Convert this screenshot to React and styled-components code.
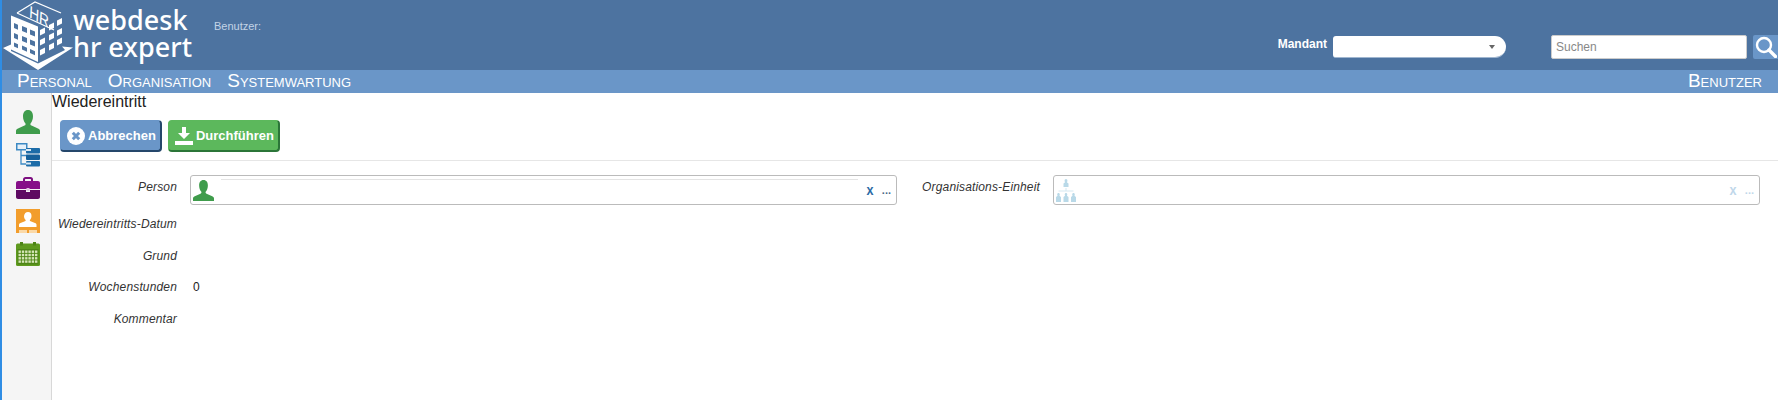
import React from 'react'
import styled, { createGlobalStyle } from 'styled-components'

const GlobalStyle = createGlobalStyle`
  html, body { margin: 0; padding: 0; height: 100%; background: #fff; overflow: hidden; }
  body { font-family: "Liberation Sans", Arial, sans-serif; font-size: 12px; color: #222; }
  #root { height: 100%; }
`

const PersonIcon = ({ size = 24, color = '#3f9c4c' }) => (
  <svg width={size} height={size} viewBox="0 0 24 24">
    <path fill={color} d="M12 0c3.300 0 5 2.700 5 6.200 0 3-1 5.400-2.300 7-.7.9-.3 1.900.8 2.400l6.500 3c1.300.6 2 1.300 2 2.400V24H0v-3c0-1.100.7-1.800 2-2.400l6.500-3c1.100-.5 1.500-1.500.8-2.400C8 11.600 7 9.200 7 6.200 7 2.700 8.700 0 12 0z" />
  </svg>
)

const TreeIcon = () => (
  <svg width="24" height="24" viewBox="0 0 24 24">
    <rect x="0.750" y="0.750" width="10" height="6" fill="#e6f0f8" stroke="#3d8ac4" strokeWidth="1.500" />
    <path d="M5 7v14h6M5 12.500h6" fill="none" stroke="#3d8ac4" strokeWidth="1.300" />
    <rect x="10" y="5" width="14" height="5.500" rx="1" fill="#1c6ca8" />
    <rect x="10" y="11.500" width="14" height="5.500" rx="1" fill="#15609a" />
    <rect x="10" y="18" width="14" height="5.500" rx="1" fill="#1c6ca8" />
    <path d="M10 7h5M10 20.500h5" stroke="#dbe9f4" strokeWidth="2" />
  </svg>
)

const CaseIcon = () => (
  <svg width="24" height="22" viewBox="0 0 24 22">
    <path fill="none" stroke="#7d0f80" strokeWidth="2" d="M8 4.500V2.500C8 1.600 8.600 1 9.500 1h5c.9 0 1.500.6 1.500 1.500v2" />
    <path fill="#860f88" d="M2 4h20c1.100 0 2 .9 2 2v6H0V6c0-1.100.9-2 2-2z" />
    <path fill="#5e0a62" d="M0 13h10v2h4v-2h10v7c0 1.100-.9 2-2 2H2c-1.100 0-2-.9-2-2z" />
    <rect x="10.500" y="11" width="3" height="3" fill="#e3c8e4" />
  </svg>
)

const OrgPersonIcon = () => (
  <svg width="24" height="24" viewBox="0 0 24 24">
    <rect width="24" height="24" fill="#f29d2c" />
    <path fill="#fff" d="M12 3c2.300 0 3.500 1.700 3.500 3.900 0 1.700-.7 3-1.500 3.900-.5.600-.2 1.200.6 1.500l4.400 1.700c1 .4 1.500 1 1.500 1.800V18H3v-2.200c0-.8.500-1.400 1.500-1.800l4.400-1.700c.8-.3 1.100-.9.600-1.500-.8-.9-1.500-2.200-1.500-3.900C8.500 4.700 9.700 3 12 3z" />
    <rect x="3" y="21" width="8" height="3" fill="#fbd9a8" />
    <rect x="13" y="21" width="8" height="3" fill="#fbd9a8" />
  </svg>
)

const CalendarIcon = () => {
  const cells = []
  for (let r = 0; r < 4; r++) {
    for (let c = 0; c < 6; c++) {
      cells.push(<rect key={r + '-' + c} x={2.500 + c * 3.300} y={8.500 + r * 3.300} width="2.400" height="2.400" fill="#d6e6b8" />)
    }
  }
  return (
    <svg width="24" height="24" viewBox="0 0 24 24">
      <rect y="1.500" width="24" height="22.500" rx="1.500" fill="#5f9a1f" />
      <rect x="4" width="3" height="3.500" fill="#4d8416" />
      <rect x="17" width="3" height="3.500" fill="#4d8416" />
      <rect x="1.500" y="7" width="21" height="15.500" fill="#4e8517" />
      {cells}
    </svg>
  )
}

const OrgTreeIcon = () => (
  <svg width="20" height="24" viewBox="0 0 20 24" fill="#b9d9e8">
    <path d="M10 1c.9 0 1.400.8 1.400 1.700 0 .7-.3 1.200-.5 1.500l1.600 1.300V9h-5V5.500l1.600-1.300c-.2-.3-.5-.8-.5-1.500C8.600 1.800 9.100 1 10 1z" />
    <path d="M2.500 15c.8 0 1.300.7 1.300 1.500 0 .6-.2 1-.4 1.300L5 19v5H0v-5l1.600-1.200c-.2-.3-.4-.7-.4-1.300 0-.8.500-1.500 1.300-1.500z" />
    <path d="M10 15c.8 0 1.300.7 1.300 1.500 0 .6-.2 1-.4 1.300L12.500 19v5h-5v-5l1.600-1.200c-.2-.3-.4-.7-.4-1.300 0-.8.500-1.500 1.300-1.500z" />
    <path d="M17.500 15c.8 0 1.300.7 1.300 1.500 0 .6-.2 1-.4 1.300L20 19v5h-5v-5l1.600-1.200c-.2-.3-.4-.7-.4-1.300 0-.8.500-1.500 1.300-1.500z" />
    <path d="M2.500 13h15M10 10v3" stroke="#d5e8f1" strokeWidth="1" fill="none" />
  </svg>
)

const LogoBuilding = () => (
  <svg width="71" height="70" viewBox="0 0 71 70">
    <path fill="#fff" d="M1 48l8-3.600V51l27 12.600L63 50l-3-3.500 11 1L36 70z" />
    <path fill="#fff" fillRule="evenodd" d="M9 15.500l27 11V62L9 49.500zM12 23v5l4 1.700v-5zM20 26v5l5 2v-5zM28 29.500v5l5 2v-5zM12 33v5l4 1.700v-5zM20 36v5l5 2v-5zM28 39.500v5l5 2v-5zM12 42.500v4l4 1.800v-4zM20 45.500v4l5 2.300v-4zM28 49v4l5 2.300v-4z" />
    <path fill="#fff" d="M38 30l5-2.500v5.500l-5 2.500zM47 25l5-2.500V28l-5 2.500zM55 20.500l5-2.500v5.500l-5 2.500zM38 40l5-2.500V43l-5 2.500zM47 35l5-2.500V38l-5 2.500zM55 30.500l5-2.500V33.500l-5 2.500zM38 50l5-2.500V53l-5 2.500zM47 45l5-2.500V48l-5 2.500zM55 40l5-2.500V43l-5 2.500z" />
    <path fill="none" stroke="#fff" strokeWidth="1.200" d="M15 13L33 2l26 11M15 13l37 17" />
    <text x="0" y="0" fill="#fff" fontFamily="Liberation Sans" fontSize="17" transform="matrix(.8 .45 -.05 1 27 17)">HR</text>
  </svg>
)

const SearchIcon = () => (
  <svg width="22" height="22" viewBox="0 0 22 22" fill="none" stroke="#fff">
    <circle cx="9" cy="9" r="7" strokeWidth="2.400" />
    <path d="M14 14l6.500 6.500" strokeWidth="3.400" strokeLinecap="round" />
  </svg>
)

const CancelIcon = () => (
  <svg width="18" height="18" viewBox="0 0 18 18">
    <circle cx="9" cy="9" r="9" fill="#fff" />
    <path d="M5.800 5.800l6.400 6.400M12.200 5.800l-6.400 6.400" stroke="#6a96c8" strokeWidth="3" />
  </svg>
)

const DownloadIcon = () => (
  <svg width="18" height="18" viewBox="0 0 18 18" fill="#fff">
    <path d="M7 0h4v6h4l-6 6-6-6h4z" />
    <rect y="14" width="18" height="4" />
  </svg>
)

export default function App() {
  return (
    <Page>
      <GlobalStyle />
      <Header>
        <LogoBuilding />
        <LogoText>
          <span>webdesk</span>
          <span>hr expert</span>
        </LogoText>
        <UserLabel>Benutzer:</UserLabel>
        <HeaderRight>
          <MandantLabel>Mandant</MandantLabel>
          <MandantSelect><Caret /></MandantSelect>
          <SearchInput placeholder="Suchen" readOnly />
          <SearchButton><SearchIcon /></SearchButton>
        </HeaderRight>
      </Header>
      <Nav>
        <NavGroup>
          <NavItem>Personal</NavItem>
          <NavItem>Organisation</NavItem>
          <NavItem>Systemwartung</NavItem>
        </NavGroup>
        <NavItem>Benutzer</NavItem>
      </Nav>
      <Main>
        <Sidebar>
          <SideIcon><PersonIcon /></SideIcon>
          <SideIcon><TreeIcon /></SideIcon>
          <SideIcon><CaseIcon /></SideIcon>
          <SideIcon><OrgPersonIcon /></SideIcon>
          <SideIcon><CalendarIcon /></SideIcon>
        </Sidebar>
        <Content>
          <Title>Wiedereintritt</Title>
          <Toolbar>
            <ActionButton $bg="#6a96c8" $dark="#25476b"><CancelIcon />Abbrechen</ActionButton>
            <ActionButton $bg="#5cb85c" $dark="#2b7538"><DownloadIcon />Durchführen</ActionButton>
          </Toolbar>
          <Form>
            <Column>
              <Row $h={37}>
                <Label>Person</Label>
                <PickerBox>
                  <PersonIcon size={21} />
                  <PickerLine />
                  <ClearX>x</ClearX>
                  <Dots>...</Dots>
                </PickerBox>
              </Row>
              <Row><Label>Wiedereintritts-Datum</Label></Row>
              <Row $h={31}><Label>Grund</Label></Row>
              <Row><Label>Wochenstunden</Label><Value>0</Value></Row>
              <Row><Label>Kommentar</Label></Row>
            </Column>
            <Column>
              <Row $h={37}>
                <Label>Organisations-Einheit</Label>
                <PickerBox>
                  <OrgTreeIcon />
                  <Spacer />
                  <ClearX $faded>x</ClearX>
                  <Dots $faded>...</Dots>
                </PickerBox>
              </Row>
            </Column>
          </Form>
        </Content>
      </Main>
    </Page>
  )
}

const Page = styled.div`
  height: 100vh;
  display: flex;
  flex-direction: column;
  border-left: 2px solid #2f8de4;
  box-sizing: border-box;
`
const Header = styled.header`
  height: 70px;
  flex: none;
  background: #4d73a0;
  display: flex;
  align-items: flex-start;
`
const LogoText = styled.div`
  display: flex;
  flex-direction: column;
  margin: 6px 0 0 0;
  color: #fff;
  font-family: "Noto Sans", sans-serif;
  font-size: 27px;
  font-weight: 500;
  line-height: 27px;
`
const UserLabel = styled.div`
  margin: 20px 0 0 22px;
  font-size: 11px;
  color: #c3d3e6;
`
const HeaderRight = styled.div`
  margin-left: auto;
  display: flex;
  align-items: flex-start;
  padding-top: 35px;
`
const MandantLabel = styled.div`
  font-size: 12px;
  font-weight: bold;
  color: #fff;
  margin: 2px 6px 0 0;
`
const MandantSelect = styled.div`
  width: 173px;
  height: 22px;
  margin-top: 1px;
  background: #fff;
  border-radius: 3px 11px 11px 3px;
  border-bottom: 1px solid #9fb6d0;
  display: flex;
  align-items: center;
  justify-content: flex-end;
  padding-right: 11px;
  box-sizing: border-box;
`
const Caret = styled.span`
  width: 0;
  height: 0;
  border-left: 3.500px solid transparent;
  border-right: 3.500px solid transparent;
  border-top: 4px solid #666;
`
const SearchInput = styled.input`
  width: 196px;
  height: 24px;
  margin-left: 45px;
  box-sizing: border-box;
  padding: 0 4px;
  border: 1px solid #ccc;
  border-radius: 2px;
  background: #fff;
  font: 12px "Liberation Sans", sans-serif;
  &::placeholder { color: #888; }
`
const SearchButton = styled.div`
  width: 25px;
  height: 24px;
  margin-left: 6px;
  background: #6a96c8;
  border-radius: 2px 0 0 2px;
  display: flex;
  align-items: center;
  justify-content: center;
`
const Nav = styled.nav`
  height: 23px;
  flex: none;
  background: #6a96c8;
  display: flex;
  align-items: center;
  justify-content: space-between;
  padding: 0 16px 0 15px;
`
const NavGroup = styled.div`
  display: flex;
  gap: 16px;
`
const NavItem = styled.span`
  color: #fff;
  font-size: 19px;
  font-variant: small-caps;
  line-height: 20px;
  margin-top: -2px;
`
const Main = styled.main`
  flex: 1;
  display: flex;
  min-height: 0;
`
const Sidebar = styled.aside`
  width: 50px;
  flex: none;
  box-sizing: border-box;
  background: #f5f5f5;
  border-right: 1px solid #d8d8d8;
  display: flex;
  flex-direction: column;
  align-items: center;
  padding: 17px 0 0 3px;
  gap: 9px;
`
const SideIcon = styled.div`
  width: 24px;
  height: 24px;
  display: flex;
  align-items: center;
`
const Content = styled.div`
  flex: 1;
  min-width: 0;
`
const Title = styled.h1`
  margin: 0;
  font-size: 16px;
  font-weight: normal;
  line-height: 18px;
  color: #222;
`
const Toolbar = styled.div`
  display: flex;
  gap: 6px;
  padding: 9px 8px 8px;
  height: 32px;
  border-bottom: 1px solid #e6e6e6;
`
const ActionButton = styled.button`
  height: 32px;
  padding: 0 4px 0 6px;
  display: flex;
  align-items: center;
  gap: 3px;
  background: ${p => p.$bg};
  border: 1px solid ${p => p.$bg};
  border-bottom: 2px solid ${p => p.$dark};
  border-right: 2px solid ${p => p.$dark};
  border-radius: 4px;
  color: #fff;
  font: bold 13px "Liberation Sans", sans-serif;
`
const Form = styled.div`
  display: grid;
  grid-template-columns: 1fr 1fr;
  column-gap: 18px;
  padding: 14px 18px 0 0;
`
const Column = styled.div`
  display: flex;
  flex-direction: column;
`
const Row = styled.div`
  height: ${p => p.$h || 32}px;
  display: flex;
  align-items: flex-start;
`
const Label = styled.label`
  width: 125px;
  flex: none;
  text-align: right;
  font-style: italic;
  font-size: 12px;
  letter-spacing: 0.15px;
  line-height: 24px;
  color: #333;
`
const PickerBox = styled.div`
  flex: 1;
  height: 30px;
  margin-left: 13px;
  box-sizing: border-box;
  border: 1px solid #bbb;
  border-radius: 3px;
  display: flex;
  align-items: center;
  padding: 0 5px 0 2px;
`
const PickerLine = styled.div`
  flex: 1;
  align-self: flex-start;
  margin: 3px 8px 0 7px;
  height: 1px;
  background: #e4e4e4;
`
const Spacer = styled.div`
  flex: 1;
`
const ClearX = styled.span`
  font-size: 14px;
  font-weight: bold;
  color: ${p => (p.$faded ? '#c0d7ea' : '#2b6aa5')};
  margin-right: 8px;
  transform: scaleX(0.9);
`
const Dots = styled.span`
  font-size: 11px;
  font-weight: bold;
  color: ${p => (p.$faded ? '#c0d7ea' : '#4a6a8a')};
`
const Value = styled.span`
  margin-left: 16px;
  font-size: 12px;
  line-height: 24px;
  color: #222;
`
